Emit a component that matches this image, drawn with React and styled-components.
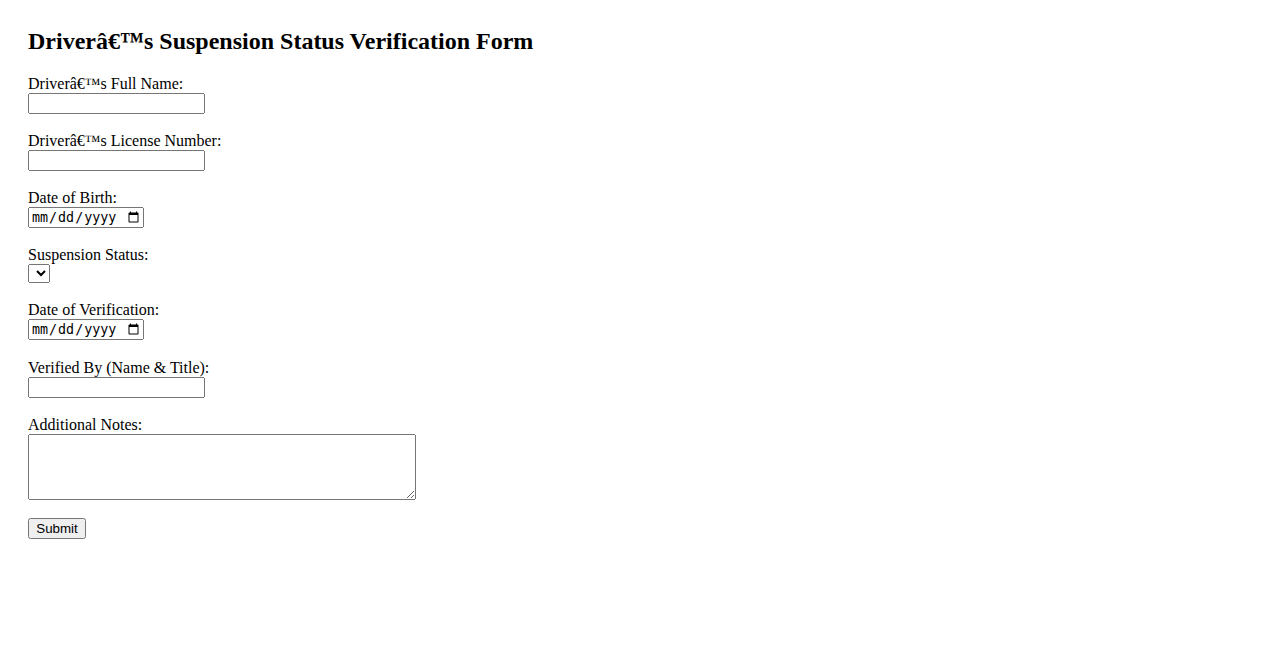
import React from "react";
import styled, { createGlobalStyle } from "styled-components";

const Global = createGlobalStyle`
  html, body { background: #ffffff; }
  body {
    margin: 8px;
    padding: 20px;
    font-family: "Liberation Serif", "Times New Roman", serif;
    font-size: 16px;
    color: #000;
  }
`;

const Title = styled.h2`
  font-size: 24px;
  font-weight: bold;
  margin: 0 0 20px 0;
`;

const Group = styled.div`
  margin-bottom: ${(p) => p.$gap || 18}px;
`;

const Label = styled.label`
  display: block;
`;

const TextInput = styled.input`
  box-sizing: border-box;
  width: ${(p) => (p.type === "date" ? "116px" : "177px")};
  height: 21px;
`;

const StatusSelect = styled.select`
  box-sizing: border-box;
  width: 22px;
  height: 19px;
`;

const Notes = styled.textarea`
  box-sizing: border-box;
  width: 388px;
  height: 66px;
  vertical-align: bottom;
`;

const SubmitButton = styled.button`
  box-sizing: border-box;
  width: 58px;
  height: 21px;
`;

const fields = [
  { id: "name", label: "Driverâ€™s Full Name:", type: "text" },
  { id: "license", label: "Driverâ€™s License Number:", type: "text" },
  { id: "dob", label: "Date of Birth:", type: "date" },
];

export default function App() {
  return (
    <>
      <Global />
      <Title>Driverâ€™s Suspension Status Verification Form</Title>
      <form onSubmit={(e) => e.preventDefault()}>
        {fields.map((f) => (
          <Group key={f.id}>
            <Label htmlFor={f.id}>{f.label}</Label>
            <TextInput id={f.id} type={f.type} />
          </Group>
        ))}
        <Group>
          <Label htmlFor="status">Suspension Status:</Label>
          <StatusSelect id="status"></StatusSelect>
        </Group>
        <Group $gap={19}>
          <Label htmlFor="dov">Date of Verification:</Label>
          <TextInput id="dov" type="date" />
        </Group>
        <Group>
          <Label htmlFor="by">Verified By (Name &amp; Title):</Label>
          <TextInput id="by" type="text" />
        </Group>
        <Group>
          <Label htmlFor="notes">Additional Notes:</Label>
          <Notes id="notes" rows={4} cols={50} />
        </Group>
        <SubmitButton type="submit">Submit</SubmitButton>
      </form>
    </>
  );
}
